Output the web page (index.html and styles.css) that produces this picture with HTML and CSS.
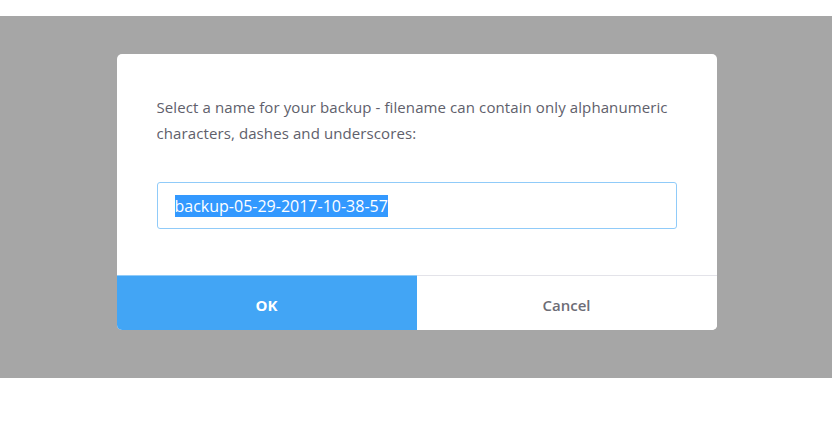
FILE: index.html
```html
<!DOCTYPE html>
<html lang="en">
  <head>
    <meta charset="UTF-8">
    <title>Backup</title>
    <link rel="stylesheet" href="styles.css">
  </head>
  <body>
    <div class="overlay">
      <div class="dialog" role="dialog">
        <div class="dialog-body">
          <p class="message">Select a name for your backup - filename can contain only alphanumeric characters, dashes and underscores:</p>
          <div class="field">
            <span class="selected">backup-05-29-2017-10-38-57</span>
          </div>
        </div>
        <div class="dialog-footer">
          <button class="btn btn-ok">OK</button>
          <button class="btn btn-cancel">Cancel</button>
        </div>
      </div>
    </div>
  </body>
</html>
```
FILE: styles.css
```css
body {
  margin: 0;
  padding: 16px 0 0;
  background: #fff;
  font-family: "Open Sans", "Noto Sans", sans-serif;
}
.overlay {
  height: 362px;
  box-sizing: border-box;
  padding-top: 38px;
  background: #a6a6a6;
  display: flex;
  justify-content: center;
}
.dialog {
  width: 600px;
  height: 276px;
  margin-left: 1px;
  background: #fff;
  border-radius: 5px;
  overflow: hidden;
  display: flex;
  flex-direction: column;
}
.dialog-body {
  flex: 1;
  padding: 40px 40px 0;
}
.message {
  margin: 0;
  font-size: 15px;
  letter-spacing: 0.1px;
  line-height: 26px;
  color: #60606b;
}
.field {
  margin-top: 36px;
  height: 47px;
  box-sizing: border-box;
  border: 1px solid #90cbf9;
  border-radius: 3px;
  padding-left: 17px;
  display: flex;
  align-items: center;
}
.selected {
  background: #3399ff;
  color: #fff;
  font-size: 16px;
  line-height: 22px;
}
.dialog-footer {
  display: flex;
  height: 55px;
  border-top: 1px solid #e3e3e9;
  box-sizing: border-box;
}
.btn {
  flex: 1;
  border: none;
  margin: 0;
  padding: 4px 0 0;
  font-family: inherit;
  font-size: 15px;
  cursor: pointer;
}
.btn-ok {
  margin-top: -1px;
  border-top: 1px solid #8fcbf9;
  background: #42a5f5;
  color: #fff;
  font-weight: 700;
}
.btn-cancel {
  background: #fff;
  color: #6d6d76;
  font-weight: 600;
}
```
